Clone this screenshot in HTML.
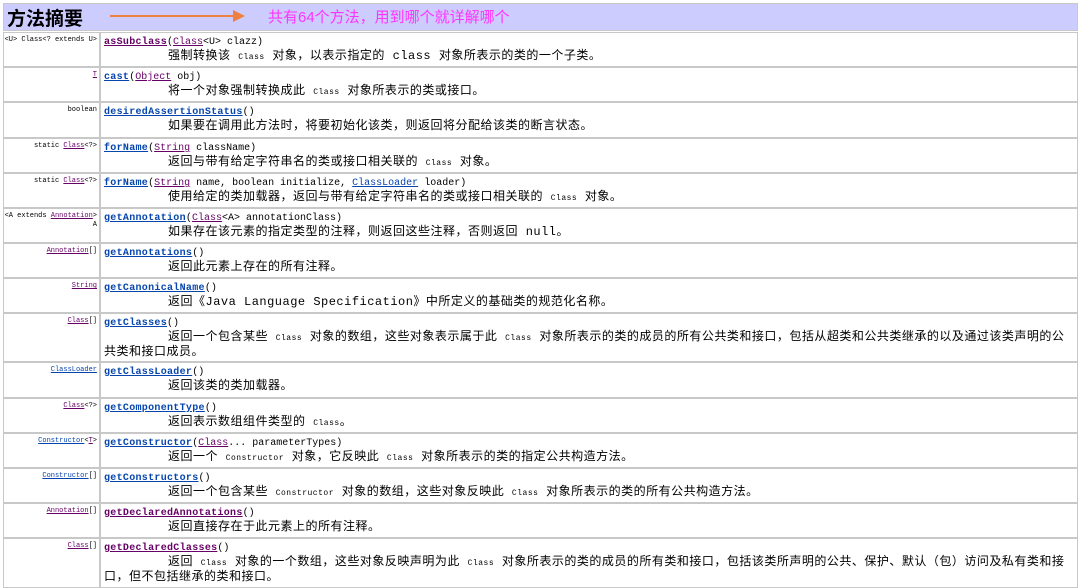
<!DOCTYPE html>
<html><head><meta charset="utf-8"><style>
body{margin:0;width:1086px;height:579px;overflow:hidden;background:#fff;font-family:"Liberation Sans","Noto Sans CJK SC",sans-serif;position:relative}
.hdr{position:absolute;left:3px;top:3px;width:1075px;height:28px;background:#ccccff;border:1px solid #c8c8c8;box-sizing:border-box}
.hdr b{position:absolute;left:3px;top:2px;font-size:19px;font-family:"Noto Sans CJK SC",sans-serif;line-height:24px;color:#000}
.hdr .n{position:absolute;left:264px;top:4px;font-size:15px;color:#ff33ff;line-height:20px;font-family:"Liberation Sans","Noto Sans CJK SC",sans-serif}
.arr{position:absolute;left:110px;top:15px;width:125px;height:2px;background:#f08040}
.arrh{position:absolute;left:233px;top:10px;width:0;height:0;border-left:12px solid #f08040;border-top:6px solid transparent;border-bottom:6px solid transparent}
.row{position:absolute;left:3px;width:1075px;border:1px solid #c8c8c8;box-sizing:border-box;overflow:hidden}
.l{position:absolute;left:0;top:0;bottom:0;width:97px;border-right:2px solid #c8c8c8;text-align:right;font:7px "Liberation Mono",monospace;padding:3px 2px 0 0;box-sizing:border-box;line-height:9px;color:#000}
.r{position:absolute;left:100px;top:3px;right:8px;font:10px "Liberation Mono",monospace;line-height:13px}
.m{font-weight:bold;color:#0645ad;text-decoration:underline;letter-spacing:.3px}
.v{color:#660066}
.d{font:12px "Liberation Mono","Noto Sans CJK SC",monospace;line-height:15px;color:#000;text-indent:64px;letter-spacing:.5px}
.d code{font:8px "Liberation Mono",monospace}
u{color:#660066}
</style></head><body>
<div class="hdr"><b>方法摘要</b><span class="n">共有64个方法，用到哪个就详解哪个</span></div>
<div class="arr"></div><div class="arrh"></div>

<div class="row" style="top:32px;height:35px"><div class="l">&lt;U&gt; Class&lt;? extends U&gt;</div><div class="r"><span class="m v">asSubclass</span>(<u>Class</u>&lt;U&gt; clazz)<div class="d">强制转换该 <code>Class</code> 对象，以表示指定的 class 对象所表示的类的一个子类。</div></div></div>
<div class="row" style="top:67px;height:35px"><div class="l"><u>T</u></div><div class="r"><span class="m">cast</span>(<u>Object</u> obj)<div class="d">将一个对象强制转换成此 <code>Class</code> 对象所表示的类或接口。</div></div></div>
<div class="row" style="top:102px;height:36px"><div class="l">boolean</div><div class="r"><span class="m">desiredAssertionStatus</span>()<div class="d">如果要在调用此方法时，将要初始化该类，则返回将分配给该类的断言状态。</div></div></div>
<div class="row" style="top:138px;height:35px"><div class="l">static <u>Class</u>&lt;?&gt;</div><div class="r"><span class="m">forName</span>(<u>String</u> className)<div class="d">返回与带有给定字符串名的类或接口相关联的 <code>Class</code> 对象。</div></div></div>
<div class="row" style="top:173px;height:35px"><div class="l">static <u>Class</u>&lt;?&gt;</div><div class="r"><span class="m">forName</span>(<u>String</u> name, boolean initialize, <span style="color:#0645ad;text-decoration:underline">ClassLoader</span> loader)<div class="d">使用给定的类加载器，返回与带有给定字符串名的类或接口相关联的 <code>Class</code> 对象。</div></div></div>
<div class="row" style="top:208px;height:35px"><div class="l">&lt;A extends <u>Annotation</u>&gt;<br>A</div><div class="r"><span class="m">getAnnotation</span>(<u>Class</u>&lt;A&gt; annotationClass)<div class="d">如果存在该元素的指定类型的注释，则返回这些注释，否则返回 null。</div></div></div>
<div class="row" style="top:243px;height:35px"><div class="l"><u>Annotation</u>[]</div><div class="r"><span class="m">getAnnotations</span>()<div class="d">返回此元素上存在的所有注释。</div></div></div>
<div class="row" style="top:278px;height:35px"><div class="l"><u>String</u></div><div class="r"><span class="m">getCanonicalName</span>()<div class="d">返回《Java Language Specification》中所定义的基础类的规范化名称。</div></div></div>
<div class="row" style="top:313px;height:49px"><div class="l"><u>Class</u>[]</div><div class="r"><span class="m">getClasses</span>()<div class="d">返回一个包含某些 <code>Class</code> 对象的数组，这些对象表示属于此 <code>Class</code> 对象所表示的类的成员的所有公共类和接口，包括从超类和公共类继承的以及通过该类声明的公共类和接口成员。</div></div></div>
<div class="row" style="top:362px;height:36px"><div class="l"><span style="color:#0645ad;text-decoration:underline">ClassLoader</span></div><div class="r"><span class="m">getClassLoader</span>()<div class="d">返回该类的类加载器。</div></div></div>
<div class="row" style="top:398px;height:35px"><div class="l"><u>Class</u>&lt;?&gt;</div><div class="r"><span class="m">getComponentType</span>()<div class="d">返回表示数组组件类型的 <code>Class</code>。</div></div></div>
<div class="row" style="top:433px;height:35px"><div class="l"><span style="color:#0645ad;text-decoration:underline">Constructor</span>&lt;<u>T</u>&gt;</div><div class="r"><span class="m">getConstructor</span>(<u>Class</u>... parameterTypes)<div class="d">返回一个 <code>Constructor</code> 对象，它反映此 <code>Class</code> 对象所表示的类的指定公共构造方法。</div></div></div>
<div class="row" style="top:468px;height:35px"><div class="l"><span style="color:#0645ad;text-decoration:underline">Constructor</span>[]</div><div class="r"><span class="m">getConstructors</span>()<div class="d">返回一个包含某些 <code>Constructor</code> 对象的数组，这些对象反映此 <code>Class</code> 对象所表示的类的所有公共构造方法。</div></div></div>
<div class="row" style="top:503px;height:35px"><div class="l"><u>Annotation</u>[]</div><div class="r"><span class="m v">getDeclaredAnnotations</span>()<div class="d">返回直接存在于此元素上的所有注释。</div></div></div>
<div class="row" style="top:538px;height:50px"><div class="l"><u>Class</u>[]</div><div class="r"><span class="m v">getDeclaredClasses</span>()<div class="d">返回 <code>Class</code> 对象的一个数组，这些对象反映声明为此 <code>Class</code> 对象所表示的类的成员的所有类和接口，包括该类所声明的公共、保护、默认（包）访问及私有类和接口，但不包括继承的类和接口。</div></div></div>
</body></html>
